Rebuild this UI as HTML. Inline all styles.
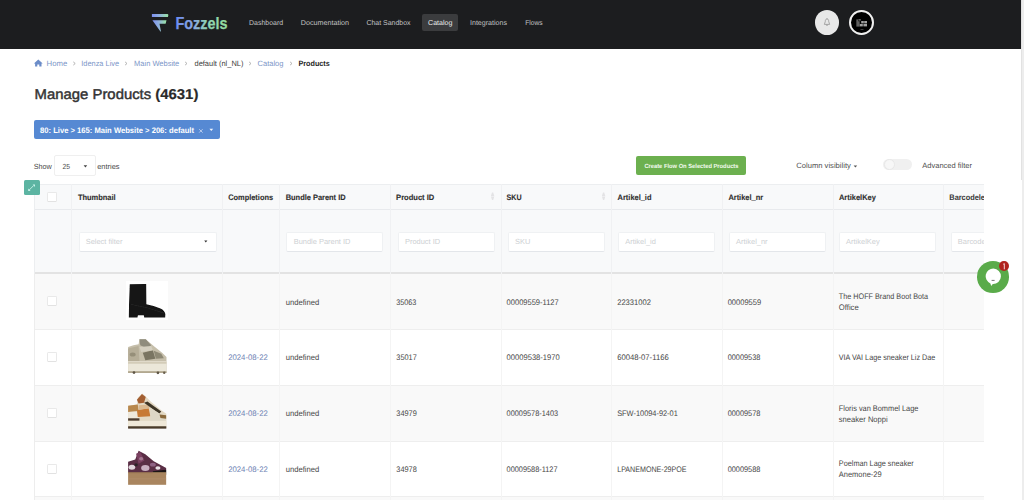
<!DOCTYPE html>
<html><head><meta charset="utf-8">
<style>
*{box-sizing:border-box;margin:0;padding:0}
html,body{width:1024px;height:500px;overflow:hidden;background:#fff;font-family:"Liberation Sans",sans-serif;color:#333;position:relative}
.abs{position:absolute}
#hdr{position:absolute;left:0;top:0;width:1021.5px;height:49px;background:#1c1d1f}
#sb{position:absolute;left:1021px;top:0;width:3px;height:500px;background:#ededed;border-left:1px solid #e2e2e2}
.inp{background:#fff;border:1px solid #eff1f3;border-bottom-color:#e3e6ea;border-radius:2px}
#txt{position:absolute;left:0;top:0}
#txt text{font-family:"Liberation Sans",sans-serif;text-rendering:geometricPrecision}
</style></head><body>
<div id="hdr"></div><div id="sb"></div>
<div class="abs" style="left:422px;top:13.5px;width:36px;height:17.5px;background:#3b3c3e;border-radius:2px"></div>
<svg class="abs" style="left:148px;top:10px" width="26" height="26" viewBox="0 0 26 26">
<defs><linearGradient id="lg" x1="0" y1="0" x2="1" y2="0"><stop offset="0" stop-color="#7d8ff2"/><stop offset="0.45" stop-color="#8fb0dc"/><stop offset="1" stop-color="#98e4a2"/></linearGradient></defs>
<path d="M3.9 3.9 H19.6 Q20.8 4.4 20.3 5.6 L19.9 7 H3.9 Z" fill="url(#lg)"/>
<path d="M4.4 10.2 H18.5 L17.6 13.8 H11.5 L13 21.4 L12.4 21.4 Z" fill="url(#lg)"/>
</svg>
<svg class="abs" style="left:170px;top:10px" width="64" height="26" viewBox="0 0 64 26">
<defs><linearGradient id="lg2" gradientUnits="userSpaceOnUse" x1="5" y1="0" x2="58" y2="0"><stop offset="0" stop-color="#6a8bf3"/><stop offset="0.35" stop-color="#8aa8e0"/><stop offset="0.6" stop-color="#8fd3b4"/><stop offset="1" stop-color="#93de98"/></linearGradient></defs>
<text x="5.5" y="18.7" font-family="Liberation Sans" font-weight="bold" font-size="16.4" fill="url(#lg2)" stroke="url(#lg2)" stroke-width="0.25" textLength="52" lengthAdjust="spacingAndGlyphs">Fozzels</text>
</svg>
<div class="abs" style="left:814.6px;top:9.8px;width:24.6px;height:25.2px;border-radius:50%;background:#e8e8e8"></div>
<svg class="abs" style="left:821px;top:16px" width="12" height="12" viewBox="0 0 12 12"><path d="M6 3 C4.6 3 4.3 4.2 4.3 5.4 L3.4 8.4 H8.6 L7.7 5.4 C7.7 4.2 7.4 3 6 3 Z M6 2.2 V3 M5.2 9.3 H6.8" fill="none" stroke="#8a8a8a" stroke-width="0.7"/></svg>
<div class="abs" style="left:849.3px;top:10px;width:24.8px;height:25px;border-radius:50%;background:#000;border:2.2px solid #f0f0f0"></div>
<svg class="abs" style="left:849px;top:9.5px" width="26" height="26" viewBox="0 0 26 26"><g fill="#a0a0a0"><rect x="7.6" y="9.4" width="1" height="7.2"/><rect x="9.4" y="11.2" width="1" height="5.4"/><rect x="9.4" y="9.4" width="2.4" height="1"/><rect x="12.2" y="11" width="2.6" height="2.4"/><rect x="15.2" y="11" width="2.8" height="2.4"/><rect x="10.8" y="14" width="3" height="2.4"/><rect x="14.4" y="14" width="3.6" height="2.4"/><rect x="11.5" y="19" width="3" height="0.6" fill="#666"/></g></svg>
<div class="abs" style="left:34px;top:120px;width:186px;height:19px;background:#5689d3;border-radius:2px"></div>
<div class="abs" style="left:54.4px;top:155.4px;width:41.4px;height:20.5px;border:1px solid #efefef;border-radius:2px"></div>
<div class="abs" style="left:635.7px;top:155.7px;width:110.8px;height:19.1px;background:#6cb04f;border-radius:2px"></div>
<div class="abs" style="left:883.4px;top:158.9px;width:28.4px;height:10.9px;border-radius:6px;background:#f0f0f0"></div>
<div class="abs" style="left:884px;top:158.6px;width:11.2px;height:11.2px;border-radius:50%;background:#f7f7f7;border:1px solid #e8e8e8"></div>
<div class="abs" style="left:34px;top:184px;width:950px;height:89px;background:#f8f9fa"></div>
<div class="abs" style="left:34px;top:273px;width:950px;height:56px;background:#f9f9f9"></div>
<div class="abs" style="left:34px;top:329px;width:950px;height:56px;background:#ffffff"></div>
<div class="abs" style="left:34px;top:385px;width:950px;height:56px;background:#f9f9f9"></div>
<div class="abs" style="left:34px;top:441px;width:950px;height:55px;background:#ffffff"></div>
<div class="abs" style="left:34px;top:496px;width:950px;height:10px;background:#f9f9f9"></div>
<div class="abs" style="left:34px;top:184px;width:950px;height:1px;background:#eceef0"></div>
<div class="abs" style="left:34px;top:209px;width:950px;height:1px;background:#e8eaed"></div>
<div class="abs" style="left:34px;top:272.4px;width:950px;height:1.6px;background:#e3e3e3"></div>
<div class="abs" style="left:34px;top:329px;width:950px;height:1px;background:#eeeeee"></div>
<div class="abs" style="left:34px;top:385px;width:950px;height:1px;background:#eeeeee"></div>
<div class="abs" style="left:34px;top:441px;width:950px;height:1px;background:#eeeeee"></div>
<div class="abs" style="left:34px;top:496px;width:950px;height:1px;background:#eeeeee"></div>
<div class="abs" style="left:34px;top:184px;width:1px;height:89px;background:#eceef0"></div>
<div class="abs" style="left:34px;top:273px;width:1px;height:227px;background:#ededed"></div>
<div class="abs" style="left:71px;top:184px;width:1px;height:89px;background:#f0f1f3"></div>
<div class="abs" style="left:71px;top:273px;width:1px;height:227px;background:#f4f4f4"></div>
<div class="abs" style="left:222px;top:184px;width:1px;height:89px;background:#f0f1f3"></div>
<div class="abs" style="left:222px;top:273px;width:1px;height:227px;background:#f4f4f4"></div>
<div class="abs" style="left:279px;top:184px;width:1px;height:89px;background:#f0f1f3"></div>
<div class="abs" style="left:279px;top:273px;width:1px;height:227px;background:#f4f4f4"></div>
<div class="abs" style="left:390px;top:184px;width:1px;height:89px;background:#f0f1f3"></div>
<div class="abs" style="left:390px;top:273px;width:1px;height:227px;background:#f4f4f4"></div>
<div class="abs" style="left:501px;top:184px;width:1px;height:89px;background:#f0f1f3"></div>
<div class="abs" style="left:501px;top:273px;width:1px;height:227px;background:#f4f4f4"></div>
<div class="abs" style="left:611px;top:184px;width:1px;height:89px;background:#f0f1f3"></div>
<div class="abs" style="left:611px;top:273px;width:1px;height:227px;background:#f4f4f4"></div>
<div class="abs" style="left:722px;top:184px;width:1px;height:89px;background:#f0f1f3"></div>
<div class="abs" style="left:722px;top:273px;width:1px;height:227px;background:#f4f4f4"></div>
<div class="abs" style="left:833px;top:184px;width:1px;height:89px;background:#f0f1f3"></div>
<div class="abs" style="left:833px;top:273px;width:1px;height:227px;background:#f4f4f4"></div>
<div class="abs" style="left:943px;top:184px;width:1px;height:89px;background:#f0f1f3"></div>
<div class="abs" style="left:943px;top:273px;width:1px;height:227px;background:#f4f4f4"></div>
<div class="abs" style="left:47.2px;top:191.6px;width:9.4px;height:10px;background:#fff;border:1px solid #e9e9e9;border-bottom-color:#e2e2e2;border-radius:1.5px"></div>
<div class="abs" style="left:47.2px;top:296.3px;width:9.4px;height:10px;background:#fff;border:1px solid #e9e9e9;border-bottom-color:#e2e2e2;border-radius:1.5px"></div>
<div class="abs" style="left:47.2px;top:352.1px;width:9.4px;height:10px;background:#fff;border:1px solid #e9e9e9;border-bottom-color:#e2e2e2;border-radius:1.5px"></div>
<div class="abs" style="left:47.2px;top:407.9px;width:9.4px;height:10px;background:#fff;border:1px solid #e9e9e9;border-bottom-color:#e2e2e2;border-radius:1.5px"></div>
<div class="abs" style="left:47.2px;top:463.7px;width:9.4px;height:10px;background:#fff;border:1px solid #e9e9e9;border-bottom-color:#e2e2e2;border-radius:1.5px"></div>
<div class="abs inp" style="left:79px;top:231.8px;width:137.5px;height:20px"></div>
<div class="abs inp" style="left:286.4px;top:231.8px;width:97px;height:20px"></div>
<div class="abs inp" style="left:397.7px;top:231.8px;width:97px;height:20px"></div>
<div class="abs inp" style="left:507.7px;top:231.8px;width:97px;height:20px"></div>
<div class="abs inp" style="left:617.9px;top:231.8px;width:97px;height:20px"></div>
<div class="abs inp" style="left:728.8px;top:231.8px;width:97px;height:20px"></div>
<div class="abs inp" style="left:838.8px;top:231.8px;width:97px;height:20px"></div>
<div class="abs inp" style="left:950.6px;top:231.8px;width:40px;height:20px"></div>
<div class="abs" style="left:984px;top:180px;width:37.5px;height:320px;background:#fff"></div>
<div class="abs" style="left:23.5px;top:180px;width:16.4px;height:15px;background:#5cb4a2;border-radius:1.5px"></div>
<svg class="abs" style="left:23px;top:180px" width="17" height="16" viewBox="0 0 17 16"><path d="M6 10.2 L10.8 5.4" stroke="#c9f3ea" stroke-width="0.9"/><path d="M9.6 4.6 H12 V7 Z M5.2 8.6 V11 H7.6 Z" fill="#c9f3ea"/></svg>
<div class="abs" style="left:126px;top:281px;width:42px;height:39px;background:#fff"></div>
<svg class="abs" style="left:126px;top:280px" width="42" height="42" viewBox="0 0 500 500"><defs><filter id="bl280" x="-5%" y="-5%" width="110%" height="110%"><feGaussianBlur stdDeviation="7"/></filter></defs><g filter="url(#bl280)">
<path d="M45 52 L240 48 L242 290 Q330 305 410 338 Q462 362 468 405 L466 446 L218 446 L212 420 L142 420 L136 446 L34 446 L36 300 Z" fill="#121212"/>
<path d="M60 290 Q250 320 455 395" stroke="#2c2c2c" stroke-width="8" fill="none"/>
<path d="M140 60 V280" stroke="#262626" stroke-width="6"/>
</g></svg>
<svg class="abs" style="left:126px;top:336px" width="42" height="42" viewBox="0 0 500 500"><defs><filter id="bl336" x="-5%" y="-5%" width="110%" height="110%"><feGaussianBlur stdDeviation="7"/></filter></defs><g filter="url(#bl336)">
<path d="M25 440 L25 130 Q90 105 150 98 L160 40 L235 38 L330 120 L430 200 L482 250 L482 440 Z" fill="#c6bfab"/>
<path d="M160 40 L235 38 L300 110 L250 150 L170 110 Z" fill="#8f8c7d"/>
<path d="M25 150 L150 120 L160 300 L25 300 Z" fill="#b6ae98"/>
<ellipse cx="80" cy="220" rx="35" ry="25" fill="#968f79"/>
<path d="M200 200 L320 170 L350 270 L230 290 Z" fill="#7a7562"/>
<path d="M330 175 L420 210 L450 265 L355 270 Z" fill="#8e8975"/>
<path d="M160 130 L300 120 L320 170 L180 190 Z" fill="#d4cfc0"/>
<rect x="25" y="300" width="457" height="120" fill="#ebe7d9"/>
<path d="M25 318 H482" stroke="#d3ccb8" stroke-width="22"/>
<path d="M25 430 H482" stroke="#b2a890" stroke-width="20"/>
<circle cx="95" cy="435" r="16" fill="#5d5445"/><circle cx="380" cy="438" r="16" fill="#5d5445"/><circle cx="455" cy="438" r="14" fill="#6a604e"/>
</g></svg>
<svg class="abs" style="left:126px;top:391px" width="42" height="42" viewBox="0 0 500 500"><defs><filter id="bl391" x="-5%" y="-5%" width="110%" height="110%"><feGaussianBlur stdDeviation="7"/></filter></defs><g filter="url(#bl391)">
<path d="M25 440 L25 175 L130 160 L140 80 L195 30 L240 70 L300 130 L420 230 L480 270 L480 440 Z" fill="#e3d9c4"/>
<path d="M130 105 L190 35 L235 70 L215 140 L150 150 Z" fill="#a35f32"/>
<path d="M25 175 L140 160 L150 240 L25 250 Z" fill="#b8884e"/>
<path d="M25 250 L150 240 L150 320 L25 330 Z" fill="#efe9dc"/>
<path d="M130 225 L270 205 L290 300 L140 310 Z" fill="#c77a36"/>
<path d="M150 170 L270 160 L280 205 L150 225 Z" fill="#d8b890"/>
<path d="M215 140 L255 125 L420 245 L395 270 Z" fill="#3c3528"/>
<path d="M290 200 L420 280 L478 300 L478 400 L290 400 Z" fill="#ddd7c6"/>
<path d="M400 280 L478 290 L478 330 L410 320 Z" fill="#8a6a3c"/>
<path d="M25 325 H160 V355 H25 Z" fill="#4e3e30"/>
<rect x="25" y="355" width="455" height="65" fill="#efe8d8"/>
<rect x="25" y="420" width="455" height="28" fill="#4a3a2c"/>
</g></svg>
<svg class="abs" style="left:126px;top:447px" width="42" height="42" viewBox="0 0 500 500"><defs><filter id="bl447" x="-5%" y="-5%" width="110%" height="110%"><feGaussianBlur stdDeviation="7"/></filter></defs><g filter="url(#bl447)">
<path d="M25 300 L25 175 L110 150 L150 45 L230 85 L330 170 L440 230 L478 250 L478 300 Z" fill="#5a2d45"/>
<path d="M120 80 L170 60 L220 160 L150 200 Z" fill="#7a4060"/>
<ellipse cx="70" cy="240" rx="40" ry="30" fill="#e0d6dc"/>
<ellipse cx="120" cy="210" rx="20" ry="18" fill="#2a2228"/>
<ellipse cx="230" cy="250" rx="50" ry="35" fill="#c9aec0"/>
<ellipse cx="180" cy="140" rx="25" ry="20" fill="#a37890"/>
<ellipse cx="320" cy="210" rx="35" ry="22" fill="#8f6484"/>
<ellipse cx="380" cy="250" rx="30" ry="20" fill="#e9e2e6"/>
<path d="M320 290 L478 270 L478 330 L320 330 Z" fill="#1a1618"/>
<rect x="25" y="300" width="453" height="150" fill="#a9855f"/>
<path d="M25 305 H320" stroke="#8e6a4c" stroke-width="12"/>
<path d="M25 380 H478" stroke="#b39070" stroke-width="8"/>
</g></svg>
<div class="abs" style="left:977.2px;top:261.2px;width:32px;height:31.4px;border-radius:50%;background:#5aab4a"></div>
<svg class="abs" style="left:977px;top:261px" width="32" height="32" viewBox="0 0 32 32"><path d="M16.4 7.4 A7.8 7.8 0 1 1 15.8 23 L14.2 25 L13.4 22.4 A7.8 7.8 0 0 1 16.4 7.4 Z" fill="#fff"/><path d="M14.6 19.4 H17.6" stroke="#666" stroke-width="0.9"/></svg>
<div class="abs" style="left:999.2px;top:261.3px;width:9.8px;height:10.2px;border-radius:50%;background:#b1231e"></div>
<svg class="abs" style="left:999px;top:261px" width="10" height="11" viewBox="0 0 10 11"><path d="M4.2 3.3 L5.3 2.6 V8.3" stroke="#f3d6d6" stroke-width="1" fill="none"/></svg>
<svg id="txt" width="1024" height="500" viewBox="0 0 1024 500">
<text x="249.10" y="25.20" font-size="7.1" fill="#c2c2c3" textLength="34.00" lengthAdjust="spacingAndGlyphs">Dashboard</text>
<text x="300.70" y="25.20" font-size="7.1" fill="#c2c2c3" textLength="48.40" lengthAdjust="spacingAndGlyphs">Documentation</text>
<text x="366.50" y="25.20" font-size="7.1" fill="#c2c2c3" textLength="44.00" lengthAdjust="spacingAndGlyphs">Chat Sandbox</text>
<text x="428.10" y="25.20" font-size="7.1" fill="#ececec" textLength="24.20" lengthAdjust="spacingAndGlyphs">Catalog</text>
<text x="470.00" y="25.20" font-size="7.1" fill="#c2c2c3" textLength="37.00" lengthAdjust="spacingAndGlyphs">Integrations</text>
<text x="525.30" y="25.20" font-size="7.1" fill="#c2c2c3" textLength="17.40" lengthAdjust="spacingAndGlyphs">Flows</text>
<path d="M38.3 59.4 L33.9 63.4 H35.1 V66.6 H37.3 V64.5 H39.3 V66.6 H41.5 V63.4 H42.7 Z" fill="#6b8cc8"/>
<text x="46.60" y="66.00" font-size="7.7" fill="#7d96c8" textLength="20.70" lengthAdjust="spacingAndGlyphs">Home</text>
<text x="81.30" y="66.00" font-size="7.7" fill="#7d96c8" textLength="37.80" lengthAdjust="spacingAndGlyphs">Idenza Live</text>
<text x="134.10" y="66.00" font-size="7.7" fill="#7d96c8" textLength="45.20" lengthAdjust="spacingAndGlyphs">Main Website</text>
<text x="194.50" y="66.00" font-size="7.7" fill="#3c3c3c" textLength="48.90" lengthAdjust="spacingAndGlyphs">default (nl_NL)</text>
<text x="257.50" y="66.00" font-size="7.7" fill="#7d96c8" textLength="26.00" lengthAdjust="spacingAndGlyphs">Catalog</text>
<text x="298.45" y="66.00" font-size="7.7" font-weight="bold" fill="#252525" textLength="31.35" lengthAdjust="spacingAndGlyphs">Products</text>
<path d="M73.3 61.9 L75.2 63.5 L73.3 65.1" fill="none" stroke="#a9a9a9" stroke-width="0.9"/>
<path d="M125.1 61.9 L127.0 63.5 L125.1 65.1" fill="none" stroke="#a9a9a9" stroke-width="0.9"/>
<path d="M185.1 61.9 L187.0 63.5 L185.1 65.1" fill="none" stroke="#a9a9a9" stroke-width="0.9"/>
<path d="M249.1 61.9 L251.0 63.5 L249.1 65.1" fill="none" stroke="#a9a9a9" stroke-width="0.9"/>
<path d="M290.1 61.9 L292.0 63.5 L290.1 65.1" fill="none" stroke="#a9a9a9" stroke-width="0.9"/>
<text x="34.60" y="99.00" font-size="14.3" fill="#333" textLength="116.60" lengthAdjust="spacingAndGlyphs" stroke="#333" stroke-width="0.45">Manage Products</text>
<text x="155.20" y="99.00" font-size="14.3" font-weight="bold" fill="#2a2a2a" textLength="43.20" lengthAdjust="spacingAndGlyphs" stroke="#2a2a2a" stroke-width="0.2">(4631)</text>
<text x="40.00" y="133.20" font-size="8.0" font-weight="bold" fill="#ffffff" textLength="154.00" lengthAdjust="spacingAndGlyphs">80: Live &gt; 165: Main Website &gt; 206: default</text>
<path d="M199.2 129.2 L202.6 132.6 M202.6 129.2 L199.2 132.6" stroke="#c3d3ef" stroke-width="0.9"/>
<path d="M209.4 128.8 H213.2 L211.3 131.1 Z" fill="#eef2fb"/>
<text x="33.70" y="168.80" font-size="7.4" fill="#4a4a4a" textLength="18.10" lengthAdjust="spacingAndGlyphs">Show</text>
<text x="62.50" y="168.80" font-size="7.4" fill="#4a4a4a" textLength="7.60" lengthAdjust="spacingAndGlyphs">25</text>
<path d="M83.6 165.3 H87.2 L85.4 167.4 Z" fill="#444"/>
<text x="97.20" y="168.80" font-size="7.4" fill="#4a4a4a" textLength="22.30" lengthAdjust="spacingAndGlyphs">entries</text>
<text x="644.40" y="167.90" font-size="6.0" font-weight="bold" fill="#f2faee" textLength="94.10" lengthAdjust="spacingAndGlyphs">Create Flow On Selected Products</text>
<text x="796.20" y="168.10" font-size="7.6" fill="#4f4f4f" textLength="54.70" lengthAdjust="spacingAndGlyphs">Column visibility</text>
<path d="M853.6 165.4 H857.2 L855.4 167.4 Z" fill="#555"/>
<text x="922.30" y="168.10" font-size="7.6" fill="#4f4f4f" textLength="49.60" lengthAdjust="spacingAndGlyphs">Advanced filter</text>
<text x="77.90" y="200.00" font-size="8.0" font-weight="bold" fill="#2e2e2e" textLength="37.70" lengthAdjust="spacingAndGlyphs" stroke="#2e2e2e" stroke-width="0.12">Thumbnail</text>
<text x="228.20" y="200.00" font-size="8.0" font-weight="bold" fill="#2e2e2e" textLength="44.90" lengthAdjust="spacingAndGlyphs" stroke="#2e2e2e" stroke-width="0.12">Completions</text>
<text x="285.70" y="200.00" font-size="8.0" font-weight="bold" fill="#2e2e2e" textLength="59.90" lengthAdjust="spacingAndGlyphs" stroke="#2e2e2e" stroke-width="0.12">Bundle Parent ID</text>
<text x="396.10" y="200.00" font-size="8.0" font-weight="bold" fill="#2e2e2e" textLength="38.20" lengthAdjust="spacingAndGlyphs" stroke="#2e2e2e" stroke-width="0.12">Product ID</text>
<text x="506.60" y="200.00" font-size="8.0" font-weight="bold" fill="#2e2e2e" textLength="15.00" lengthAdjust="spacingAndGlyphs" stroke="#2e2e2e" stroke-width="0.12">SKU</text>
<text x="617.60" y="200.00" font-size="8.0" font-weight="bold" fill="#2e2e2e" textLength="33.90" lengthAdjust="spacingAndGlyphs" stroke="#2e2e2e" stroke-width="0.12">Artikel_id</text>
<text x="728.40" y="200.00" font-size="8.0" font-weight="bold" fill="#2e2e2e" textLength="34.70" lengthAdjust="spacingAndGlyphs" stroke="#2e2e2e" stroke-width="0.12">Artikel_nr</text>
<text x="838.90" y="200.00" font-size="8.0" font-weight="bold" fill="#2e2e2e" textLength="37.00" lengthAdjust="spacingAndGlyphs" stroke="#2e2e2e" stroke-width="0.12">ArtikelKey</text>
<svg x="943" y="184" width="41" height="30"><text x="6.30" y="16.00" font-size="8.0" font-weight="bold" fill="#363636" textLength="45.94" lengthAdjust="spacingAndGlyphs">Barcodelevel</text></svg>
<path d="M490.90000000000003 195.9 L492.0 192.4 H493.20000000000005 L494.3 195.9 Z M490.90000000000003 196.5 L492.0 200 H493.20000000000005 L494.3 196.5 Z" fill="#e3e3e5"/>
<path d="M601.9 195.9 L603.0 192.4 H604.2 L605.3000000000001 195.9 Z M601.9 196.5 L603.0 200 H604.2 L605.3000000000001 196.5 Z" fill="#e3e3e5"/>
<text x="85.80" y="244.40" font-size="7.4" fill="#cdd0d3" textLength="36.60" lengthAdjust="spacingAndGlyphs">Select filter</text>
<path d="M204.2 240.4 H207.4 L205.8 242.4 Z" fill="#333"/>
<text x="293.70" y="244.40" font-size="7.4" fill="#cdd0d3" textLength="56.74" lengthAdjust="spacingAndGlyphs">Bundle Parent ID</text>
<text x="405.00" y="244.40" font-size="7.4" fill="#cdd0d3" textLength="35.19" lengthAdjust="spacingAndGlyphs">Product ID</text>
<text x="515.00" y="244.40" font-size="7.4" fill="#cdd0d3" textLength="15.32" lengthAdjust="spacingAndGlyphs">SKU</text>
<text x="625.20" y="244.40" font-size="7.4" fill="#cdd0d3" textLength="30.64" lengthAdjust="spacingAndGlyphs">Artikel_id</text>
<text x="736.10" y="244.40" font-size="7.4" fill="#cdd0d3" textLength="31.47" lengthAdjust="spacingAndGlyphs">Artikel_nr</text>
<text x="846.10" y="244.40" font-size="7.4" fill="#cdd0d3" textLength="33.54" lengthAdjust="spacingAndGlyphs">ArtikelKey</text>
<svg x="943" y="230" width="41" height="24"><text x="14.80" y="14.40" font-size="7.4" fill="#cdcfd2" textLength="43.07" lengthAdjust="spacingAndGlyphs">Barcodelevel</text></svg>
<text x="285.70" y="304.50" font-size="8.1" fill="#464646" textLength="33.60" lengthAdjust="spacingAndGlyphs">undefined</text>
<text x="396.30" y="304.50" font-size="8.1" fill="#464646" textLength="20.10" lengthAdjust="spacingAndGlyphs">35063</text>
<text x="506.60" y="304.50" font-size="8.1" fill="#464646" textLength="52.10" lengthAdjust="spacingAndGlyphs">00009559-1127</text>
<text x="617.20" y="304.50" font-size="8.1" fill="#464646" textLength="33.70" lengthAdjust="spacingAndGlyphs">22331002</text>
<text x="727.70" y="304.50" font-size="8.1" fill="#464646" textLength="33.40" lengthAdjust="spacingAndGlyphs">00009559</text>
<text x="838.80" y="298.80" font-size="8.1" fill="#464646" textLength="89.30" lengthAdjust="spacingAndGlyphs">The HOFF Brand Boot Bota</text>
<text x="838.80" y="309.60" font-size="8.1" fill="#464646" textLength="19.90" lengthAdjust="spacingAndGlyphs">Office</text>
<text x="228.20" y="360.40" font-size="8.1" fill="#6d82b4" textLength="39.60" lengthAdjust="spacingAndGlyphs">2024-08-22</text>
<text x="285.70" y="360.40" font-size="8.1" fill="#464646" textLength="33.60" lengthAdjust="spacingAndGlyphs">undefined</text>
<text x="396.30" y="360.40" font-size="8.1" fill="#464646" textLength="20.44" lengthAdjust="spacingAndGlyphs">35017</text>
<text x="506.60" y="360.40" font-size="8.1" fill="#464646" textLength="53.10" lengthAdjust="spacingAndGlyphs">00009538-1970</text>
<text x="617.20" y="360.40" font-size="8.1" fill="#464646" textLength="51.50" lengthAdjust="spacingAndGlyphs">60048-07-1166</text>
<text x="727.70" y="360.40" font-size="8.1" fill="#464646" textLength="32.70" lengthAdjust="spacingAndGlyphs">00009538</text>
<text x="838.80" y="360.40" font-size="8.1" fill="#464646" textLength="96.50" lengthAdjust="spacingAndGlyphs">VIA VAI Lage sneaker Liz Dae</text>
<text x="228.20" y="416.20" font-size="8.1" fill="#6d82b4" textLength="39.60" lengthAdjust="spacingAndGlyphs">2024-08-22</text>
<text x="285.70" y="416.20" font-size="8.1" fill="#464646" textLength="33.60" lengthAdjust="spacingAndGlyphs">undefined</text>
<text x="396.30" y="416.20" font-size="8.1" fill="#464646" textLength="20.44" lengthAdjust="spacingAndGlyphs">34979</text>
<text x="506.60" y="416.20" font-size="8.1" fill="#464646" textLength="51.50" lengthAdjust="spacingAndGlyphs">00009578-1403</text>
<text x="617.20" y="416.20" font-size="8.1" fill="#464646" textLength="60.60" lengthAdjust="spacingAndGlyphs">SFW-10094-92-01</text>
<text x="727.70" y="416.20" font-size="8.1" fill="#464646" textLength="32.70" lengthAdjust="spacingAndGlyphs">00009578</text>
<text x="838.80" y="410.70" font-size="8.1" fill="#464646" textLength="79.60" lengthAdjust="spacingAndGlyphs">Floris van Bommel Lage</text>
<text x="838.80" y="421.50" font-size="8.1" fill="#464646" textLength="48.90" lengthAdjust="spacingAndGlyphs">sneaker Noppi</text>
<text x="228.20" y="471.80" font-size="8.1" fill="#6d82b4" textLength="39.60" lengthAdjust="spacingAndGlyphs">2024-08-22</text>
<text x="285.70" y="471.80" font-size="8.1" fill="#464646" textLength="33.60" lengthAdjust="spacingAndGlyphs">undefined</text>
<text x="396.30" y="471.80" font-size="8.1" fill="#464646" textLength="20.44" lengthAdjust="spacingAndGlyphs">34978</text>
<text x="506.60" y="471.80" font-size="8.1" fill="#464646" textLength="50.96" lengthAdjust="spacingAndGlyphs">00009588-1127</text>
<text x="617.20" y="471.80" font-size="8.1" fill="#464646" textLength="69.40" lengthAdjust="spacingAndGlyphs">LPANEMONE-29POE</text>
<text x="727.70" y="471.80" font-size="8.1" fill="#464646" textLength="32.70" lengthAdjust="spacingAndGlyphs">00009588</text>
<text x="838.80" y="466.00" font-size="8.1" fill="#464646" textLength="75.00" lengthAdjust="spacingAndGlyphs">Poelman Lage sneaker</text>
<text x="838.80" y="476.80" font-size="8.1" fill="#464646" textLength="42.80" lengthAdjust="spacingAndGlyphs">Anemone-29</text>
</svg>
</body></html>
